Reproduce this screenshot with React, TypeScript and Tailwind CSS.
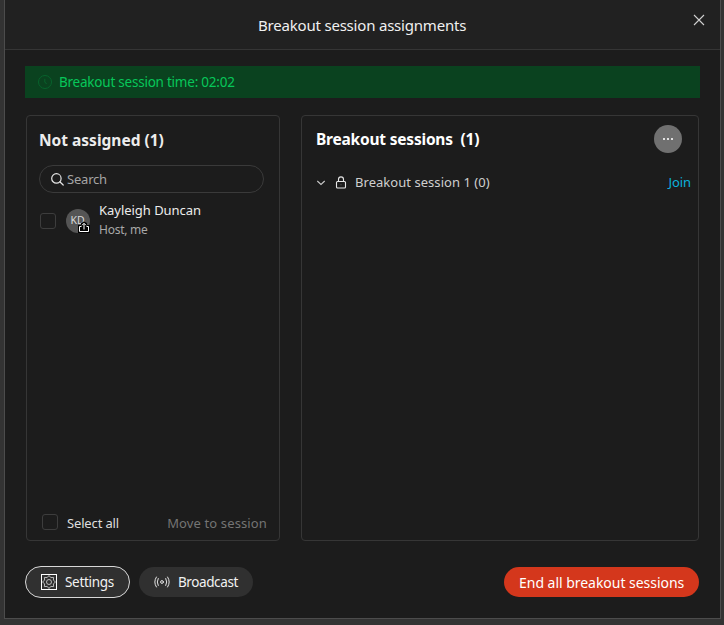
import React from "react";

function Checkbox() {
  return <span className="block size-4 shrink-0 rounded-[3px] border border-[#3d3d3d]" />;
}

function ClockIcon() {
  return (
    <svg width="14" height="14" viewBox="0 0 14 14" fill="none" stroke="#08632d" strokeWidth="1" className="block shrink-0">
      <circle cx="7" cy="7" r="6.5" />
      <path d="M6.8 3.8V7L8.6 9" />
    </svg>
  );
}

function SearchIcon() {
  return (
    <svg width="13" height="13" viewBox="0 0 13 13" fill="none" stroke="#e6e6e6" strokeWidth="1.2" className="block shrink-0">
      <circle cx="5.4" cy="5.4" r="4.7" />
      <path d="M8.8 8.8L12.2 12" strokeLinecap="round" />
    </svg>
  );
}

function ShareBadge() {
  return (
    <svg width="12" height="12" viewBox="0 0 12 12" className="block">
      <path d="M0 4H3V2L6 0.5L9 2V4H12V12H0Z" fill="#000" />
      <path d="M3.5 5.5H1.5V10.5H10.5V5.5H8.5M6 8.5V2.5M4 4.3L6 2.3L8 4.3" fill="none" stroke="#fff" strokeWidth="1" />
    </svg>
  );
}

function LockIcon() {
  return (
    <svg width="12" height="13" viewBox="0 0 12 13" fill="none" stroke="#e6e6e6" strokeWidth="1.1" className="block shrink-0">
      <rect x="1.5" y="5.5" width="9" height="6.5" rx="1" />
      <path d="M3.5 5.5V3.4A2.5 2.5 0 0 1 8.5 3.4V5.5" />
      <circle cx="6" cy="8.8" r="0.5" fill="#777" stroke="none" />
    </svg>
  );
}

function GearIcon() {
  return (
    <svg width="16" height="16" viewBox="0 0 16 16" fill="none" stroke="#c8c8c8" strokeWidth="0.9" className="block shrink-0">
      <rect x="0.5" y="0.5" width="15" height="15" stroke="#fff" strokeWidth="1" />
      <circle cx="8" cy="8" r="2.5" />
      <path d="M8 1.5L9.8 3.6L12.6 3.4L12.4 6.2L14.5 8L12.4 9.8L12.6 12.6L9.8 12.4L8 14.5L6.2 12.4L3.4 12.6L3.6 9.8L1.5 8L3.6 6.2L3.4 3.4L6.2 3.6Z" />
    </svg>
  );
}

function BroadcastIcon() {
  return (
    <svg width="16" height="12" viewBox="0 0 16 12" fill="none" stroke="#e4e4e4" strokeWidth="1" strokeLinecap="round" className="block shrink-0">
      <circle cx="8" cy="6" r="1.4" />
      <path d="M2.4 1Q-.9 6 2.4 11M4.2 2.5Q2.2 6 4.2 9.5M13.6 1Q16.9 6 13.6 11M11.8 2.5Q13.8 6 11.8 9.5" />
    </svg>
  );
}

export default function App() {
  return (
    <div className="flex h-[625px] w-[724px] flex-col overflow-hidden whitespace-nowrap bg-[#333333] pl-1 pr-[3px] font-['Noto_Sans','Liberation_Sans',sans-serif]">
      <div className="flex h-[619px] flex-col border-x border-b border-[#4c4c4c] bg-[#1c1c1c]">
        <header className="flex h-[50px] shrink-0 items-start border-b border-[#353535] bg-[#212121]">
          <h1 className="ml-[253px] mt-[15px] w-[208px] text-[15px] leading-[21px] text-[#f0f0f0]">
            <span className="tracking-[-0.2px]">Breakout session assignments</span>
          </h1>
          <button className="ml-[227px] mt-[14px]" aria-label="Close">
            <svg width="12" height="12" viewBox="0 0 12 12" stroke="#d0d0d0" strokeWidth="1.1" className="block">
              <path d="M1 1L11 11M11 1L1 11" />
            </svg>
          </button>
        </header>

        <div className="ml-5 mt-4 flex h-8 w-[675px] shrink-0 items-center bg-[#0a421f] pl-[13px] text-[13.5px] text-[#07c75a]">
          <ClockIcon />
          <span className="ml-[7px] pt-px tracking-[-0.23px]">Breakout session time: 02:02</span>
        </div>

        <main className="ml-[21px] mt-[17px] flex h-[426px] shrink-0 gap-[21px]">
          <section className="flex w-[254px] flex-col rounded-[4px] border border-[#363636]">
            <h2 className="ml-3 mt-[13px] h-[22px] text-[15.5px] font-bold leading-[22px] text-[#ececec]">
              <span className="tracking-[0px]">Not assigned (1)</span>
            </h2>
            <div className="ml-3 mt-[14px] flex h-7 w-[225px] items-center rounded-full border border-[#3a3a3a] pl-[11px] text-[13px] text-[#a5a5a5]">
              <SearchIcon />
              <span className="ml-[3px] pt-[2px] tracking-[-0.2px]">Search</span>
            </div>
            <div className="ml-[13px] mt-2 flex h-10 items-center">
              <Checkbox />
              <div className="relative ml-[10px] mt-[-1px] flex size-6 items-center justify-center rounded-full bg-[#555] text-[10.5px] text-[#d8d8d8]">
                <span className="-ml-px">KD</span>
                <span className="absolute bottom-0 right-0"><ShareBadge /></span>
              </div>
              <div className="-mt-[3px] ml-[9px]">
                <p className="text-[13px] leading-5 text-[#ececec]"><span className="tracking-[-0.03px]">Kayleigh Duncan</span></p>
                <p className="text-[12px] leading-[19px] text-[#a8a8a8]"><span className="tracking-[-0.25px]">Host, me</span></p>
              </div>
            </div>
            <div className="mb-[9px] ml-[15px] mr-3 mt-auto flex items-center text-[13px] leading-4">
              <Checkbox />
              <span className="ml-[9px] pt-[2px] tracking-[-0.15px] text-[#dedede]">Select all</span>
              <span className="ml-auto pt-[2px] tracking-[0.13px] text-[#747474]">Move to session</span>
            </div>
          </section>

          <section className="w-[398px] rounded-[4px] border border-[#363636]">
            <div className="ml-[14px] mr-4 mt-[9px] flex h-7 items-center justify-between">
              <h2 className="whitespace-pre pt-[2px] text-[15.5px] font-bold text-white">
                <span className="tracking-[-0.21px]">Breakout sessions  (1)</span>
              </h2>
              <button className="flex size-7 items-center justify-center gap-[2px] rounded-full bg-[#707070]" aria-label="More">
                <span className="size-[2px] bg-[#e0e0e0]" />
                <span className="size-[2px] bg-[#e0e0e0]" />
                <span className="size-[2px] bg-[#e0e0e0]" />
              </button>
            </div>
            <div className="ml-[14px] mr-[7px] mt-5 flex h-5 items-center text-[13px] text-[#cfcfcf]">
              <svg width="10" height="6" viewBox="0 0 10 6" fill="none" stroke="#c8c8c8" strokeWidth="1.1" className="block">
                <path d="M1.3 1L5 4.5L8.7 1" />
              </svg>
              <span className="-mt-[2px] ml-[9px]"><LockIcon /></span>
              <span className="ml-2 tracking-[0.04px]">Breakout session 1 (0)</span>
              <span className="ml-auto tracking-[-0.1px] text-[#0bb2dc]">Join</span>
            </div>
          </section>
        </main>

        <footer className="ml-5 mt-[25px] flex h-8 items-center text-[#f2f2f2]">
          <button className="flex h-8 w-[105px] items-center rounded-full border border-[#d8d8d8] bg-[#303030] pl-[15px] text-[13.5px]">
            <GearIcon />
            <span className="ml-2 tracking-[-0.3px]">Settings</span>
          </button>
          <button className="ml-[9px] flex h-[30px] w-[114px] items-center rounded-full bg-[#303030] pl-[15px] text-[13.5px]">
            <BroadcastIcon />
            <span className="ml-2 tracking-[-0.4px]">Broadcast</span>
          </button>
          <button className="ml-[251px] flex h-[30px] w-[195px] items-center rounded-full bg-[#d4371c] pl-[15px] text-[14px] text-white">
            <span className="tracking-[-0.03px]">End all breakout sessions</span>
          </button>
        </footer>
      </div>
    </div>
  );
}
